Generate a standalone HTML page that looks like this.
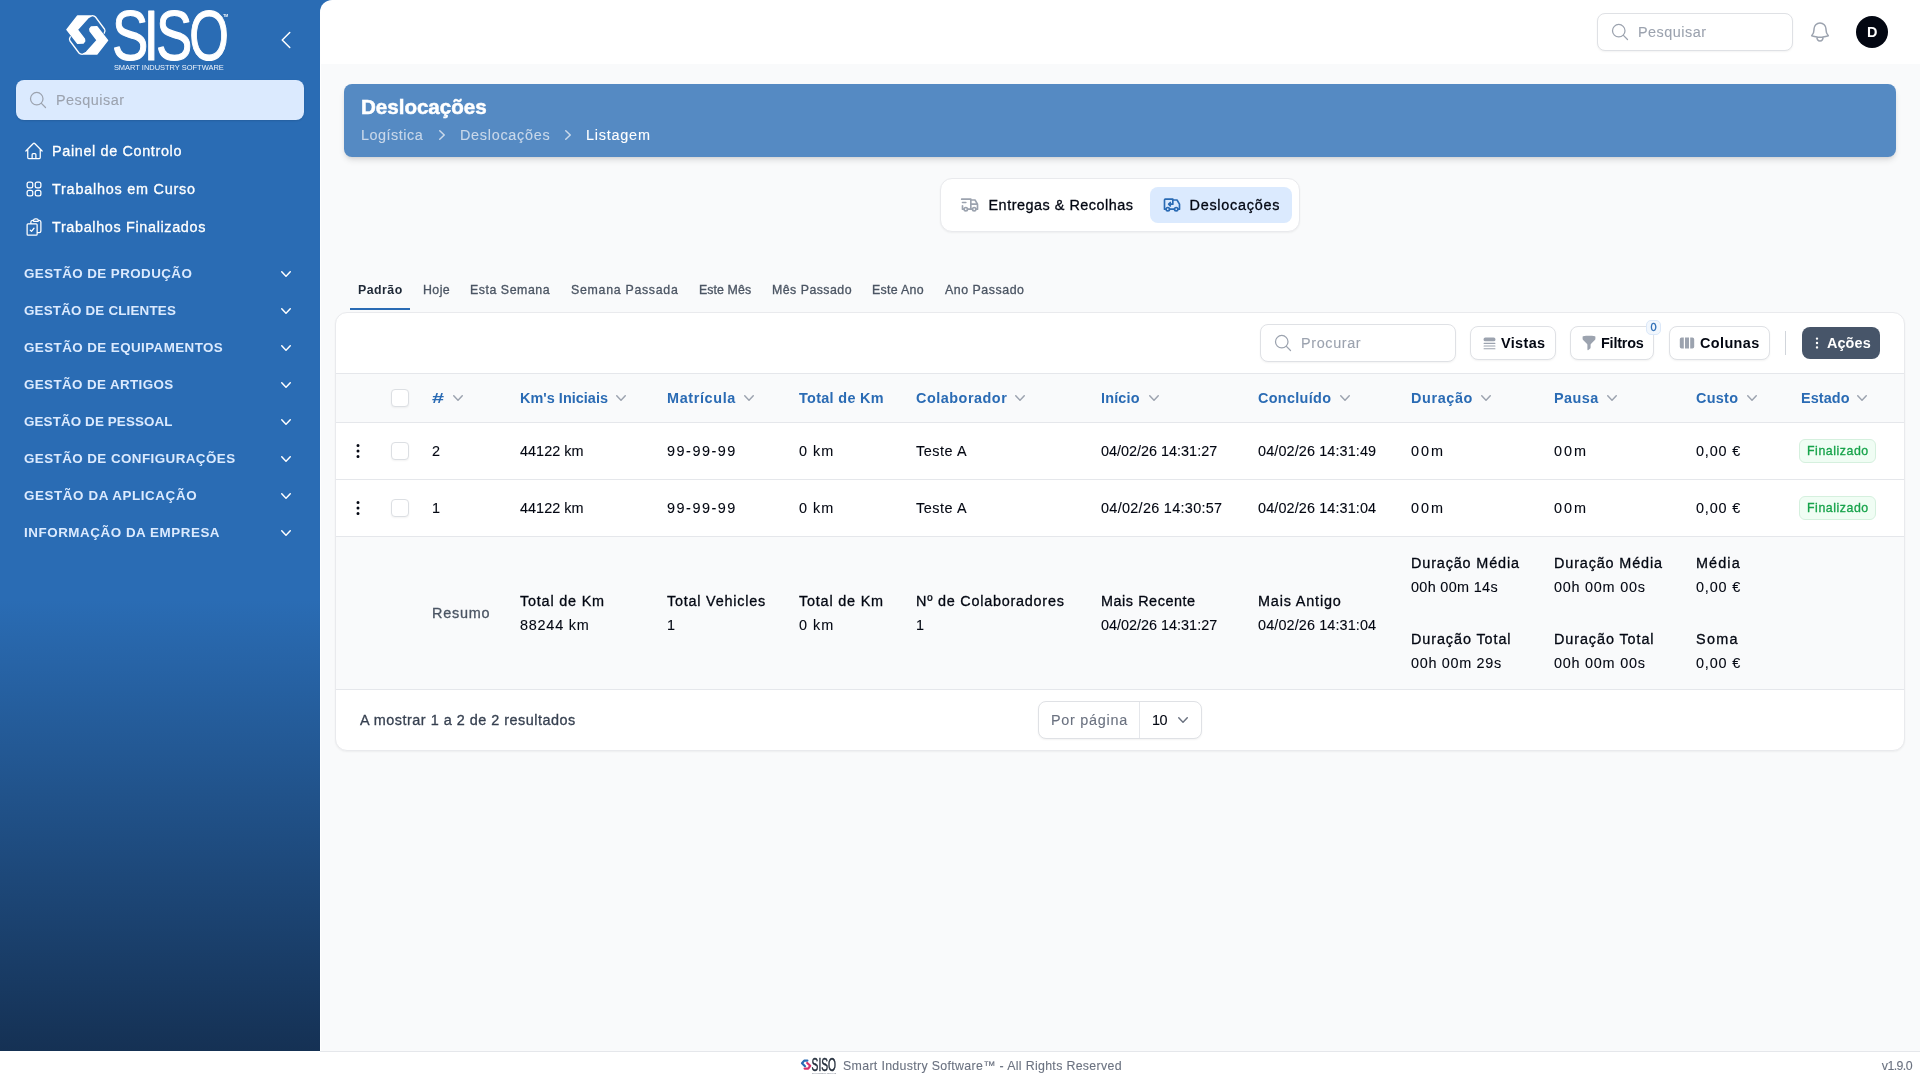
<!DOCTYPE html>
<html lang="pt">
<head>
<meta charset="utf-8">
<title>Deslocações - SISO</title>
<style>
:root{--k:1.03;--ms:0.3px;--rs:0.1px;--bs:0px;--ts:0.5px;--hx:1.5}
*{box-sizing:border-box;margin:0;padding:0}
html,body{width:1920px;height:1080px;overflow:hidden;background:#f9fafb}
body{font-family:'Liberation Sans', sans-serif;font-size:calc(14px*var(--k));color:#030712;position:relative;-webkit-font-smoothing:antialiased;filter:brightness(1)}
.abs{position:absolute}
.t{-webkit-text-stroke-width:var(--rs);position:absolute;white-space:nowrap;line-height:20px;height:20px}
svg{display:block;position:absolute}
/* sidebar */
.sidebar{position:absolute;left:0;top:0;width:334px;height:1051px;background:linear-gradient(180deg,#2a6cb4 0,#2a6cb4 600px,#153154 1051px)}
.sb-search{position:absolute;left:16px;top:80px;width:288px;height:40px;border-radius:8px;background:#dbeafe;box-shadow:0 1px 2px rgba(0,0,0,.12)}
.nav .t{color:#fff;font-weight:500;-webkit-text-stroke-width:var(--ms);left:52px}
.grp .t{-webkit-text-stroke-width:var(--bs);color:#dbeafe;font-weight:600;font-size:calc(13px*var(--k));left:24px}
/* topbar */
.topbar{position:absolute;left:320px;top:0;width:1600px;height:64px;background:#fff;border-top-left-radius:12px}
.inp{position:absolute;background:#fff;border:1px solid #dfe1e5;border-radius:8px;box-shadow:0 1px 2px rgba(0,0,0,.05)}
.ph{color:#9ca3af}
.avatar{position:absolute;left:1536px;top:16px;width:32px;height:32px;border-radius:50%;background:#030712}
/* main */
.main{position:absolute;left:320px;top:64px;width:1600px;height:987px;background:#f9fafb;box-shadow:inset 1px 0 0 #fff}
.banner{position:absolute;left:24px;top:20px;width:1552px;height:73px;border-radius:8px;background:#558ac3;box-shadow:0 4px 6px -1px rgba(0,0,0,.12),0 2px 4px -2px rgba(0,0,0,.1)}
.tabs{position:absolute;left:620px;top:114px;width:360px;height:54px;border-radius:12px;background:#fff;border:1px solid #e9eaed;box-shadow:0 1px 2px rgba(0,0,0,.05)}
.tab-on{position:absolute;left:209px;top:8px;width:142px;height:36px;border-radius:8px;background:#dbeafe}
.card{position:absolute;left:15px;top:248px;width:1570px;height:439px;border-radius:12px;background:#fff;border:1px solid #e9eaed;box-shadow:0 1px 2px rgba(0,0,0,.05);overflow:hidden}
.ci{position:absolute;left:1px;top:0;width:1566px;height:437px}
.btn{position:absolute;height:34px;top:13px;border-radius:8px;background:#fff;border:1px solid #dfe1e5;box-shadow:0 1px 2px rgba(0,0,0,.05)}
.btn .t{-webkit-text-stroke-width:var(--bs);font-weight:600;top:6px}
.hr{position:absolute;left:-1px;width:1568px;height:1px;background:#e5e7eb}
.thead{position:absolute;left:0;top:61px;width:1566px;box-shadow:-1px 0 0 #f9fafb,1px 0 0 #f9fafb;height:48px;background:#f9fafb}
.thead .t{-webkit-text-stroke-width:var(--bs);color:#2a6bb4;font-weight:600;top:14px}
.row{position:absolute;left:0;width:1566px;height:56px}
.row .t{top:18px}
.cb{position:absolute;left:54px;width:18px;height:18px;border-radius:4px;background:#fff;border:1px solid #dcdfe3;box-shadow:0 1px 2px rgba(0,0,0,.05)}
.badge{position:absolute;left:1462px;top:16px;width:77px;height:24px;border-radius:6px;background:#f0fdf4;border:1px solid #d5f0de}
.st{-webkit-text-stroke-width:var(--ms);top:216px;font-size:calc(12px*var(--k));font-weight:500;color:#4b5563}
.badge .t{-webkit-text-stroke-width:var(--ms);color:#16a34a;font-size:calc(12px*var(--k));font-weight:500;left:7px;top:1px}
.sum{position:absolute;left:0;top:224px;width:1566px;box-shadow:-1px 0 0 #f9fafb,1px 0 0 #f9fafb;height:152px;background:#f9fafb}
.sum .l{font-weight:500;-webkit-text-stroke-width:var(--ms)}
.pp{position:absolute;left:701px;top:388px;width:164px;height:38px;border-radius:8px;background:#fff;border:1px solid #dfe1e5;box-shadow:0 1px 2px rgba(0,0,0,.05)}
.footer{position:absolute;left:0;top:1051px;width:1920px;height:29px;background:#fff}
.footer:before{content:"";position:absolute;left:320px;top:0;width:1600px;height:1px;background:#e5e7eb}
.footer .t{font-size:calc(12px*var(--k));color:#6b7280;top:5px}
</style>
</head>
<body>
<aside class="sidebar">
  <div class="logo">
    <svg viewBox="0 0 170 64" width="170" height="64" style="left:60px;top:8px" aria-label="SISO Smart Industry Software">
      <g fill="#fff" stroke="#fff" stroke-width="1.4" stroke-linejoin="round" stroke-linecap="round">
        <path d="M17.60 7.90 L31.60 7.90 L28.10 9.70 L17.30 21.75 L24.40 30.90 L24.70 33.00 L23.20 35.00 L17.60 35.20 L6.90 21.60Z"/>
        <path d="M36.90 46.10 L22.90 46.10 L26.40 44.30 L37.20 32.25 L30.10 23.10 L29.80 21.00 L31.30 19.00 L36.90 18.80 L47.60 32.40Z"/>
        <path d="M32.25 7.60 Q34.50 7.80 35.50 9.00 L44.60 21.25 Q45.70 23.00 44.20 25.20" fill="none" stroke-width="1.3"/>
        <path d="M22.25 46.40 Q20.00 46.20 19.00 45.00 L9.90 32.75 Q8.80 31.00 10.30 28.80" fill="none" stroke-width="1.3"/>
      </g>
      <text y="51.6" fill="#fff" stroke="#fff" stroke-width="1.1" stroke-linejoin="round" font-family="'Liberation Sans', sans-serif" font-weight="400" font-size="70"><tspan x="52" textLength="36.3" lengthAdjust="spacingAndGlyphs">S</tspan><tspan x="83.6" textLength="15.6" lengthAdjust="spacingAndGlyphs">I</tspan><tspan x="95.9" textLength="36.3" lengthAdjust="spacingAndGlyphs">S</tspan><tspan x="129.2" textLength="39.6" lengthAdjust="spacingAndGlyphs">O</tspan></text>
      <text x="163.2" y="9.4" fill="#fff" font-family="'Liberation Sans', sans-serif" font-size="3.4" font-weight="700">TM</text>
      <text x="53.9" y="61.7" fill="#f0f5fc" font-family="'Liberation Sans', sans-serif" font-weight="400" font-size="7.9" textLength="109.9" lengthAdjust="spacingAndGlyphs">SMART INDUSTRY SOFTWARE</text>
    </svg>
  </div>
  <svg class="ic-chev-left" viewBox="0 0 24 24" width="24" height="24" style="left:274px;top:28px;color:#fff" fill="none" stroke="currentColor" stroke-width="1.5" stroke-linecap="round" stroke-linejoin="round"><path d="M15.75 19.5L8.25 12l7.5-7.5"/></svg>
  <div class="sb-search"><svg class="ic-search" viewBox="0 0 24 24" width="20" height="20" style="left:12px;top:10px;color:#9ca3af" fill="none" stroke="currentColor" stroke-width="1.5" stroke-linecap="round" stroke-linejoin="round"><path d="M21 21l-5.197-5.197m0 0A7.5 7.5 0 105.196 5.196a7.5 7.5 0 0010.607 10.607z"/></svg><span class="t ph" style="letter-spacing:0.49px;left:40px;top:10px">Pesquisar</span></div>
  <nav class="nav">
    <svg class="ic-home" viewBox="0 0 24 24" width="20" height="20" style="left:24px;top:141px;color:#fff" fill="none" stroke="currentColor" stroke-width="1.5" stroke-linecap="round" stroke-linejoin="round"><path d="M2.25 12l8.954-8.955c.44-.439 1.152-.439 1.591 0L21.75 12M4.5 9.75v10.125c0 .621.504 1.125 1.125 1.125H9.75v-4.875c0-.621.504-1.125 1.125-1.125h2.25c.621 0 1.125.504 1.125 1.125V21h4.125c.621 0 1.125-.504 1.125-1.125V9.75M8.25 21h8.25"/></svg><svg class="ic-grid" viewBox="0 0 24 24" width="20" height="20" style="left:24px;top:179px;color:#fff" fill="none" stroke="currentColor" stroke-width="1.5" stroke-linecap="round" stroke-linejoin="round"><path d="M3.75 6A2.25 2.25 0 016 3.75h2.25A2.25 2.25 0 0110.5 6v2.25a2.25 2.25 0 01-2.25 2.25H6a2.25 2.25 0 01-2.25-2.25V6zM3.75 15.75A2.25 2.25 0 016 13.5h2.25a2.25 2.25 0 012.25 2.25V18a2.25 2.25 0 01-2.25 2.25H6A2.25 2.25 0 013.75 18v-2.25zM13.5 6a2.25 2.25 0 012.25-2.25H18A2.25 2.25 0 0120.25 6v2.25A2.25 2.25 0 0118 10.5h-2.25a2.25 2.25 0 01-2.25-2.25V6zM13.5 15.75a2.25 2.25 0 012.25-2.25H18a2.25 2.25 0 012.25 2.25V18A2.25 2.25 0 0118 20.25h-2.25A2.25 2.25 0 0113.5 18v-2.25z"/></svg><svg class="ic-clip" viewBox="0 0 24 24" width="20" height="20" style="left:24px;top:217px;color:#fff" fill="none" stroke="currentColor" stroke-width="1.5" stroke-linecap="round" stroke-linejoin="round"><path d="M11.35 3.836c-.065.21-.1.433-.1.664 0 .414.336.75.75.75h4.5a.75.75 0 00.75-.75 2.25 2.25 0 00-.1-.664m-5.8 0A2.251 2.251 0 0113.5 2.25H15c1.012 0 1.867.668 2.15 1.586m-5.8 0c-.376.023-.75.05-1.124.08C9.095 4.01 8.25 4.973 8.25 6.108V8.25m8.9-4.414c.376.023.75.05 1.124.08 1.131.094 1.976 1.057 1.976 2.192V16.5A2.25 2.25 0 0118 18.75h-2.25m-7.5-10.5H4.875c-.621 0-1.125.504-1.125 1.125v11.25c0 .621.504 1.125 1.125 1.125h9.75c.621 0 1.125-.504 1.125-1.125V18.75m-7.5-10.5h6.375c.621 0 1.125.504 1.125 1.125v9.375m-8.25-3l1.5 1.5 3-3.75"/></svg>
    <span class="t" style="letter-spacing:0.64px;top:141px">Painel de Controlo</span>
    <span class="t" style="letter-spacing:0.77px;top:179px">Trabalhos em Curso</span>
    <span class="t" style="letter-spacing:0.65px;top:217px">Trabalhos Finalizados</span>
  </nav>
  <div class="grp">
    <svg class="ic-chev-down" viewBox="0 0 20 20" width="20" height="20" style="left:276px;top:264px;color:#fff" fill="currentColor"><path fill-rule="evenodd" d="M5.23 7.21a.75.75 0 011.06.02L10 11.168l3.71-3.938a.75.75 0 111.08 1.04l-4.25 4.5a.75.75 0 01-1.08 0l-4.25-4.5a.75.75 0 01.02-1.06z" clip-rule="evenodd"/></svg><svg class="ic-chev-down" viewBox="0 0 20 20" width="20" height="20" style="left:276px;top:301px;color:#fff" fill="currentColor"><path fill-rule="evenodd" d="M5.23 7.21a.75.75 0 011.06.02L10 11.168l3.71-3.938a.75.75 0 111.08 1.04l-4.25 4.5a.75.75 0 01-1.08 0l-4.25-4.5a.75.75 0 01.02-1.06z" clip-rule="evenodd"/></svg><svg class="ic-chev-down" viewBox="0 0 20 20" width="20" height="20" style="left:276px;top:338px;color:#fff" fill="currentColor"><path fill-rule="evenodd" d="M5.23 7.21a.75.75 0 011.06.02L10 11.168l3.71-3.938a.75.75 0 111.08 1.04l-4.25 4.5a.75.75 0 01-1.08 0l-4.25-4.5a.75.75 0 01.02-1.06z" clip-rule="evenodd"/></svg><svg class="ic-chev-down" viewBox="0 0 20 20" width="20" height="20" style="left:276px;top:375px;color:#fff" fill="currentColor"><path fill-rule="evenodd" d="M5.23 7.21a.75.75 0 011.06.02L10 11.168l3.71-3.938a.75.75 0 111.08 1.04l-4.25 4.5a.75.75 0 01-1.08 0l-4.25-4.5a.75.75 0 01.02-1.06z" clip-rule="evenodd"/></svg><svg class="ic-chev-down" viewBox="0 0 20 20" width="20" height="20" style="left:276px;top:412px;color:#fff" fill="currentColor"><path fill-rule="evenodd" d="M5.23 7.21a.75.75 0 011.06.02L10 11.168l3.71-3.938a.75.75 0 111.08 1.04l-4.25 4.5a.75.75 0 01-1.08 0l-4.25-4.5a.75.75 0 01.02-1.06z" clip-rule="evenodd"/></svg><svg class="ic-chev-down" viewBox="0 0 20 20" width="20" height="20" style="left:276px;top:449px;color:#fff" fill="currentColor"><path fill-rule="evenodd" d="M5.23 7.21a.75.75 0 011.06.02L10 11.168l3.71-3.938a.75.75 0 111.08 1.04l-4.25 4.5a.75.75 0 01-1.08 0l-4.25-4.5a.75.75 0 01.02-1.06z" clip-rule="evenodd"/></svg><svg class="ic-chev-down" viewBox="0 0 20 20" width="20" height="20" style="left:276px;top:486px;color:#fff" fill="currentColor"><path fill-rule="evenodd" d="M5.23 7.21a.75.75 0 011.06.02L10 11.168l3.71-3.938a.75.75 0 111.08 1.04l-4.25 4.5a.75.75 0 01-1.08 0l-4.25-4.5a.75.75 0 01.02-1.06z" clip-rule="evenodd"/></svg><svg class="ic-chev-down" viewBox="0 0 20 20" width="20" height="20" style="left:276px;top:523px;color:#fff" fill="currentColor"><path fill-rule="evenodd" d="M5.23 7.21a.75.75 0 011.06.02L10 11.168l3.71-3.938a.75.75 0 111.08 1.04l-4.25 4.5a.75.75 0 01-1.08 0l-4.25-4.5a.75.75 0 01.02-1.06z" clip-rule="evenodd"/></svg>
    <span class="t" style="letter-spacing:0.43px;top:264px">GESTÃO DE PRODUÇÃO</span>
    <span class="t" style="letter-spacing:0.19px;top:301px">GESTÃO DE CLIENTES</span>
    <span class="t" style="letter-spacing:0.43px;top:338px">GESTÃO DE EQUIPAMENTOS</span>
    <span class="t" style="letter-spacing:0.39px;top:375px">GESTÃO DE ARTIGOS</span>
    <span class="t" style="letter-spacing:0.13px;top:412px">GESTÃO DE PESSOAL</span>
    <span class="t" style="letter-spacing:0.44px;top:449px">GESTÃO DE CONFIGURAÇÕES</span>
    <span class="t" style="letter-spacing:0.6px;top:486px">GESTÃO DA APLICAÇÃO</span>
    <span class="t" style="letter-spacing:0.55px;top:523px">INFORMAÇÃO DA EMPRESA</span>
  </div>
</aside>
<header class="topbar">
  <div class="inp" style="left:1277px;top:13px;width:196px;height:38px"><svg class="ic-search" viewBox="0 0 24 24" width="20" height="20" style="left:12px;top:8px;color:#9ca3af" fill="none" stroke="currentColor" stroke-width="1.5" stroke-linecap="round" stroke-linejoin="round"><path d="M21 21l-5.197-5.197m0 0A7.5 7.5 0 105.196 5.196a7.5 7.5 0 0010.607 10.607z"/></svg><span class="t ph" style="letter-spacing:0.49px;left:40px;top:8px">Pesquisar</span></div>
  <svg class="ic-bell" viewBox="0 0 24 24" width="24" height="24" style="left:1488px;top:20px;color:#9ca3af" fill="none" stroke="currentColor" stroke-width="1.5" stroke-linecap="round" stroke-linejoin="round"><path d="M14.857 17.082a23.848 23.848 0 005.454-1.31A8.967 8.967 0 0118 9.75v-.7V9A6 6 0 006 9v.75a8.967 8.967 0 01-2.312 6.022c1.733.64 3.56 1.085 5.455 1.31m5.714 0a24.255 24.255 0 01-5.714 0m5.714 0a3 3 0 11-5.714 0"/></svg>
  <div class="avatar"><span class="t" style="left:11px;top:6px;color:#fff;font-weight:600;-webkit-text-stroke-width:var(--bs)">D</span></div>
</header>
<main class="main">
  <section class="banner">
    <h1 class="t" style="letter-spacing:-0.03px;left:17px;top:9px;font-size:calc(20px*var(--k));line-height:28px;height:28px;font-weight:700;-webkit-text-stroke-width:var(--ts);color:#fff">Deslocações</h1>
    <span class="t" style="letter-spacing:0.51px;left:17px;top:41px;color:#c9d8ea">Logística</span>
    <svg class="ic-chev-right" viewBox="0 0 20 20" width="20" height="20" style="left:88px;top:41px;color:#c9d8ea" fill="currentColor"><path fill-rule="evenodd" d="M7.21 14.77a.75.75 0 01.02-1.06L11.168 10 7.23 6.29a.75.75 0 111.04-1.08l4.5 4.25a.75.75 0 010 1.08l-4.5 4.25a.75.75 0 01-1.06-.02z" clip-rule="evenodd"/></svg><span class="t" style="letter-spacing:0.72px;left:116px;top:41px;color:#c9d8ea">Deslocações</span><svg class="ic-chev-right" viewBox="0 0 20 20" width="20" height="20" style="left:214px;top:41px;color:#c9d8ea" fill="currentColor"><path fill-rule="evenodd" d="M7.21 14.77a.75.75 0 01.02-1.06L11.168 10 7.23 6.29a.75.75 0 111.04-1.08l4.5 4.25a.75.75 0 010 1.08l-4.5 4.25a.75.75 0 01-1.06-.02z" clip-rule="evenodd"/></svg>
    <span class="t" style="letter-spacing:0.78px;left:242px;top:41px;color:#fff">Listagem</span>
  </section>
  <div class="tabs" role="tablist">
    <div class="tab-on"></div><svg class="ic-truck-delivery" viewBox="0 0 24 24" width="20" height="20" style="left:19px;top:16px;color:#9ca3af" fill="none" stroke="currentColor" stroke-width="2" stroke-linecap="round" stroke-linejoin="round"><path d="M7 17m-2 0a2 2 0 1 0 4 0a2 2 0 1 0 -4 0"/><path d="M17 17m-2 0a2 2 0 1 0 4 0a2 2 0 1 0 -4 0"/><path d="M5 17h-2v-4m-1 -8h11v12m-4 0h6m4 0h2v-6h-8m0 -5h5l3 5"/><path d="M3 9l4 0"/></svg><svg class="ic-truck-return" viewBox="0 0 24 24" width="20" height="20" style="left:221px;top:16px;color:#2a6bb4" fill="none" stroke="currentColor" stroke-width="2" stroke-linecap="round" stroke-linejoin="round"><path d="M7 17m-2 0a2 2 0 1 0 4 0a2 2 0 1 0 -4 0"/><path d="M17 17m-2 0a2 2 0 1 0 4 0a2 2 0 1 0 -4 0"/><path d="M5 17h-2v-11a1 1 0 0 1 1 -1h9v6h-5l2 2m0 -4l-2 2"/><path d="M9 17l6 0"/><path d="M13 6h5l3 5v6h-2"/></svg>
    <span class="t" style="letter-spacing:0.51px;left:47.5px;top:16px;font-weight:500;-webkit-text-stroke-width:var(--ms)">Entregas &amp; Recolhas</span>
    <span class="t" style="letter-spacing:0.75px;left:248.5px;top:16px;font-weight:500;-webkit-text-stroke-width:var(--ms)">Deslocações</span>
  </div>
  <div class="subtabs" role="tablist">
    <span class="t" style="letter-spacing:0.46px;left:38px;top:216px;font-size:calc(12px*var(--k));font-weight:600;-webkit-text-stroke-width:var(--bs);color:#1f2937">Padrão</span>
    <span class="t st" style="letter-spacing:0.43px;left:103px">Hoje</span>
    <span class="t st" style="letter-spacing:0.54px;left:150px">Esta Semana</span>
    <span class="t st" style="letter-spacing:0.71px;left:251px">Semana Passada</span>
    <span class="t st" style="letter-spacing:0.08px;left:379px">Este Mês</span>
    <span class="t st" style="letter-spacing:0.47px;left:452px">Mês Passado</span>
    <span class="t st" style="letter-spacing:0.29px;left:552px">Este Ano</span>
    <span class="t st" style="letter-spacing:0.54px;left:625px">Ano Passado</span>
    <div class="abs" style="left:30px;top:244px;width:60px;height:2px;background:#2a6bb4"></div>
  </div>
  <section class="card">
   <div class="ci" role="table" aria-label="Deslocações">
    <div class="inp" style="left:923px;top:11px;width:196px;height:38px"><svg class="ic-search" viewBox="0 0 24 24" width="20" height="20" style="left:12px;top:8px;color:#9ca3af" fill="none" stroke="currentColor" stroke-width="1.5" stroke-linecap="round" stroke-linejoin="round"><path d="M21 21l-5.197-5.197m0 0A7.5 7.5 0 105.196 5.196a7.5 7.5 0 0010.607 10.607z"/></svg><span class="t ph" style="letter-spacing:0.63px;left:40px;top:8px">Procurar</span></div>
    <div class="btn" style="left:1133px;width:86px"><svg class="ic-queue" viewBox="0 0 20 20" width="15" height="15" style="left:10.9px;top:9.2px;color:#9ca3af" fill="currentColor"><path d="M2 4.5A2.5 2.5 0 014.5 2h11a2.5 2.5 0 010 5h-11A2.5 2.5 0 012 4.5zM2.75 9.083a.75.75 0 000 1.5h14.5a.75.75 0 000-1.5H2.75zM2.75 12.663a.75.75 0 000 1.5h14.5a.75.75 0 000-1.5H2.75zM2.75 16.25a.75.75 0 000 1.5h14.5a.75.75 0 100-1.5H2.75z"/></svg><span class="t" style="letter-spacing:0.37px;left:30px">Vistas</span></div>
    <div class="btn" style="left:1233px;width:84px"><svg class="ic-funnel" viewBox="0 0 20 20" width="16" height="16" style="left:10px;top:8px;color:#9ca3af" fill="currentColor"><path fill-rule="evenodd" d="M2.628 1.601C5.028 1.206 7.49 1 10 1s4.973.206 7.372.601a.75.75 0 01.628.74v2.288a2.25 2.25 0 01-.659 1.59l-4.682 4.683a2.25 2.25 0 00-.659 1.59v3.037c0 .684-.31 1.33-.844 1.757l-1.937 1.55A.75.75 0 018 18.25v-5.757a2.25 2.25 0 00-.659-1.591L2.659 6.22A2.25 2.25 0 012 4.629V2.34a.75.75 0 01.628-.74z" clip-rule="evenodd"/></svg><span class="t" style="letter-spacing:-0.2px;left:30px">Filtros</span></div>
    <div class="btn" style="left:1332px;width:101px"><svg class="ic-columns" viewBox="0 0 20 20" width="16" height="16" style="left:9px;top:8px;color:#9ca3af" fill="currentColor"><path d="M14 17h2.75A2.25 2.25 0 0019 14.75v-9.5A2.25 2.25 0 0016.75 3H14v14zM12.5 3h-5v14h5V3zM3.25 3H6v14H3.25A2.25 2.25 0 011 14.75v-9.5A2.25 2.25 0 013.25 3z"/></svg><span class="t" style="letter-spacing:0.4px;left:30px">Colunas</span></div>
    <div class="abs fbadge" style="left:1308.5px;top:6.5px;width:15.5px;height:15px;border-radius:5px;background:#f2f7fd;border:1px solid #dbe8f9"><span class="t" style="left:4px;top:-3.5px;font-size:11px;font-weight:500;-webkit-text-stroke-width:var(--ms);color:#2a6bb4">0</span></div>
    <div class="abs" style="left:1448px;top:18px;width:1px;height:24px;background:#d1d5db"></div>
    <div class="abs" style="left:1465px;top:14px;width:78px;height:32px;border-radius:8px;background:#475569"><svg class="ic-dots-v" viewBox="0 0 20 20" width="16" height="16" style="left:7px;top:8px;color:#fff" fill="currentColor"><path d="M10 3a1.5 1.5 0 110 3 1.5 1.5 0 010-3zM10 8.5a1.5 1.5 0 110 3 1.5 1.5 0 010-3zM11.5 15.5a1.5 1.5 0 10-3 0 1.5 1.5 0 003 0z"/></svg><span class="t" style="letter-spacing:0.1px;left:25px;top:6px;color:#fff;font-weight:600;-webkit-text-stroke-width:var(--bs)">Ações</span></div>
    <div class="hr" style="top:60px"></div>
    <div class="thead" role="row">
      <div class="cb" style="top:15px"></div><svg class="ic-chev-down" viewBox="0 0 20 20" width="20" height="20" style="left:110.9px;top:14px;color:#9ca3af" fill="currentColor"><path fill-rule="evenodd" d="M5.23 7.21a.75.75 0 011.06.02L10 11.168l3.71-3.938a.75.75 0 111.08 1.04l-4.25 4.5a.75.75 0 01-1.08 0l-4.25-4.5a.75.75 0 01.02-1.06z" clip-rule="evenodd"/></svg><svg class="ic-chev-down" viewBox="0 0 20 20" width="20" height="20" style="left:274.4px;top:14px;color:#9ca3af" fill="currentColor"><path fill-rule="evenodd" d="M5.23 7.21a.75.75 0 011.06.02L10 11.168l3.71-3.938a.75.75 0 111.08 1.04l-4.25 4.5a.75.75 0 01-1.08 0l-4.25-4.5a.75.75 0 01.02-1.06z" clip-rule="evenodd"/></svg><svg class="ic-chev-down" viewBox="0 0 20 20" width="20" height="20" style="left:401.7px;top:14px;color:#9ca3af" fill="currentColor"><path fill-rule="evenodd" d="M5.23 7.21a.75.75 0 011.06.02L10 11.168l3.71-3.938a.75.75 0 111.08 1.04l-4.25 4.5a.75.75 0 01-1.08 0l-4.25-4.5a.75.75 0 01.02-1.06z" clip-rule="evenodd"/></svg><svg class="ic-chev-down" viewBox="0 0 20 20" width="20" height="20" style="left:673.2px;top:14px;color:#9ca3af" fill="currentColor"><path fill-rule="evenodd" d="M5.23 7.21a.75.75 0 011.06.02L10 11.168l3.71-3.938a.75.75 0 111.08 1.04l-4.25 4.5a.75.75 0 01-1.08 0l-4.25-4.5a.75.75 0 01.02-1.06z" clip-rule="evenodd"/></svg><svg class="ic-chev-down" viewBox="0 0 20 20" width="20" height="20" style="left:806.7px;top:14px;color:#9ca3af" fill="currentColor"><path fill-rule="evenodd" d="M5.23 7.21a.75.75 0 011.06.02L10 11.168l3.71-3.938a.75.75 0 111.08 1.04l-4.25 4.5a.75.75 0 01-1.08 0l-4.25-4.5a.75.75 0 01.02-1.06z" clip-rule="evenodd"/></svg><svg class="ic-chev-down" viewBox="0 0 20 20" width="20" height="20" style="left:998.2px;top:14px;color:#9ca3af" fill="currentColor"><path fill-rule="evenodd" d="M5.23 7.21a.75.75 0 011.06.02L10 11.168l3.71-3.938a.75.75 0 111.08 1.04l-4.25 4.5a.75.75 0 01-1.08 0l-4.25-4.5a.75.75 0 01.02-1.06z" clip-rule="evenodd"/></svg><svg class="ic-chev-down" viewBox="0 0 20 20" width="20" height="20" style="left:1139.4px;top:14px;color:#9ca3af" fill="currentColor"><path fill-rule="evenodd" d="M5.23 7.21a.75.75 0 011.06.02L10 11.168l3.71-3.938a.75.75 0 111.08 1.04l-4.25 4.5a.75.75 0 01-1.08 0l-4.25-4.5a.75.75 0 01.02-1.06z" clip-rule="evenodd"/></svg><svg class="ic-chev-down" viewBox="0 0 20 20" width="20" height="20" style="left:1265.0px;top:14px;color:#9ca3af" fill="currentColor"><path fill-rule="evenodd" d="M5.23 7.21a.75.75 0 011.06.02L10 11.168l3.71-3.938a.75.75 0 111.08 1.04l-4.25 4.5a.75.75 0 01-1.08 0l-4.25-4.5a.75.75 0 01.02-1.06z" clip-rule="evenodd"/></svg><svg class="ic-chev-down" viewBox="0 0 20 20" width="20" height="20" style="left:1405.2px;top:14px;color:#9ca3af" fill="currentColor"><path fill-rule="evenodd" d="M5.23 7.21a.75.75 0 011.06.02L10 11.168l3.71-3.938a.75.75 0 111.08 1.04l-4.25 4.5a.75.75 0 01-1.08 0l-4.25-4.5a.75.75 0 01.02-1.06z" clip-rule="evenodd"/></svg><svg class="ic-chev-down" viewBox="0 0 20 20" width="20" height="20" style="left:1515.4px;top:14px;color:#9ca3af" fill="currentColor"><path fill-rule="evenodd" d="M5.23 7.21a.75.75 0 011.06.02L10 11.168l3.71-3.938a.75.75 0 111.08 1.04l-4.25 4.5a.75.75 0 01-1.08 0l-4.25-4.5a.75.75 0 01.02-1.06z" clip-rule="evenodd"/></svg>
      <span class="t" style="left:95px;transform:scaleX(var(--hx));transform-origin:0 50%">#</span>
      <span class="t" style="letter-spacing:0.04px;left:183px">Km's Iniciais</span>
      <span class="t" style="letter-spacing:0.63px;left:330px">Matrícula</span>
      <span class="t" style="letter-spacing:0.32px;left:462px">Total de Km</span>
      <span class="t" style="letter-spacing:0.51px;left:579px">Colaborador</span>
      <span class="t" style="letter-spacing:0.17px;left:764px">Início</span>
      <span class="t" style="letter-spacing:0.32px;left:921px">Concluído</span>
      <span class="t" style="letter-spacing:0.61px;left:1074px">Duração</span>
      <span class="t" style="letter-spacing:0.48px;left:1217px">Pausa</span>
      <span class="t" style="letter-spacing:0.29px;left:1359px">Custo</span>
      <span class="t" style="letter-spacing:0.08px;left:1464px">Estado</span>
    </div>
    <div class="hr" style="top:109px"></div>
    <div class="row" role="row" style="top:110px">
      <svg class="ic-dots-v" viewBox="0 0 20 20" width="20" height="20" style="left:11px;top:18px;color:#030712" fill="currentColor"><path d="M10 3a1.5 1.5 0 110 3 1.5 1.5 0 010-3zM10 8.5a1.5 1.5 0 110 3 1.5 1.5 0 010-3zM11.5 15.5a1.5 1.5 0 10-3 0 1.5 1.5 0 003 0z"/></svg><div class="cb" style="top:19px"></div>
      <span class="t" style="left:95px">2</span>
      <span class="t" style="letter-spacing:0.04px;left:183px">44122 km</span>
      <span class="t" style="letter-spacing:1.53px;left:330px">99-99-99</span>
      <span class="t" style="letter-spacing:0.98px;left:462px">0 km</span>
      <span class="t" style="letter-spacing:0.54px;left:579px">Teste A</span>
      <span class="t" style="left:764px">04/02/26 14:31:27</span>
      <span class="t" style="letter-spacing:0.12px;left:921px">04/02/26 14:31:49</span>
      <span class="t" style="letter-spacing:1.99px;left:1074px">00m</span>
      <span class="t" style="letter-spacing:1.99px;left:1217px">00m</span>
      <span class="t" style="letter-spacing:0.84px;left:1359px">0,00 €</span>
      <div class="badge"><span class="t" style="letter-spacing:0.54px">Finalizado</span></div>
    </div>
    <div class="hr" style="top:166px"></div>
    <div class="row" role="row" style="top:167px">
      <svg class="ic-dots-v" viewBox="0 0 20 20" width="20" height="20" style="left:11px;top:18px;color:#030712" fill="currentColor"><path d="M10 3a1.5 1.5 0 110 3 1.5 1.5 0 010-3zM10 8.5a1.5 1.5 0 110 3 1.5 1.5 0 010-3zM11.5 15.5a1.5 1.5 0 10-3 0 1.5 1.5 0 003 0z"/></svg><div class="cb" style="top:19px"></div>
      <span class="t" style="left:95px">1</span>
      <span class="t" style="letter-spacing:0.04px;left:183px">44122 km</span>
      <span class="t" style="letter-spacing:1.53px;left:330px">99-99-99</span>
      <span class="t" style="letter-spacing:0.98px;left:462px">0 km</span>
      <span class="t" style="letter-spacing:0.54px;left:579px">Teste A</span>
      <span class="t" style="letter-spacing:0.31px;left:764px">04/02/26 14:30:57</span>
      <span class="t" style="letter-spacing:0.12px;left:921px">04/02/26 14:31:04</span>
      <span class="t" style="letter-spacing:1.99px;left:1074px">00m</span>
      <span class="t" style="letter-spacing:1.99px;left:1217px">00m</span>
      <span class="t" style="letter-spacing:0.84px;left:1359px">0,00 €</span>
      <div class="badge"><span class="t" style="letter-spacing:0.54px">Finalizado</span></div>
    </div>
    <div class="hr" style="top:223px"></div>
    <div class="sum" role="row">
      <span class="t" style="letter-spacing:0.78px;left:95px;top:66px;font-weight:500;-webkit-text-stroke-width:var(--ms);color:#4b5563">Resumo</span>
      <span class="t l" style="letter-spacing:0.8px;left:183px;top:54px">Total de Km</span><span class="t" style="letter-spacing:0.77px;left:183px;top:78px">88244 km</span>
      <span class="t l" style="letter-spacing:0.78px;left:330px;top:54px">Total Vehicles</span><span class="t" style="left:330px;top:78px">1</span>
      <span class="t l" style="letter-spacing:0.8px;left:462px;top:54px">Total de Km</span><span class="t" style="letter-spacing:0.98px;left:462px;top:78px">0 km</span>
      <span class="t l" style="letter-spacing:0.76px;left:579px;top:54px">Nº de Colaboradores</span><span class="t" style="left:579px;top:78px">1</span>
      <span class="t l" style="letter-spacing:0.55px;left:764px;top:54px">Mais Recente</span><span class="t" style="left:764px;top:78px">04/02/26 14:31:27</span>
      <span class="t l" style="letter-spacing:0.83px;left:921px;top:54px">Mais Antigo</span><span class="t" style="letter-spacing:0.12px;left:921px;top:78px">04/02/26 14:31:04</span>
      <span class="t l" style="letter-spacing:0.86px;left:1074px;top:16px">Duração Média</span><span class="t" style="letter-spacing:0.33px;left:1074px;top:40px">00h 00m 14s</span>
      <span class="t l" style="letter-spacing:0.91px;left:1074px;top:92px">Duração Total</span><span class="t" style="letter-spacing:0.69px;left:1074px;top:116px">00h 00m 29s</span>
      <span class="t l" style="letter-spacing:0.86px;left:1217px;top:16px">Duração Média</span><span class="t" style="letter-spacing:0.76px;left:1217px;top:40px">00h 00m 00s</span>
      <span class="t l" style="letter-spacing:0.91px;left:1217px;top:92px">Duração Total</span><span class="t" style="letter-spacing:0.76px;left:1217px;top:116px">00h 00m 00s</span>
      <span class="t l" style="letter-spacing:1.11px;left:1359px;top:16px">Média</span><span class="t" style="letter-spacing:0.84px;left:1359px;top:40px">0,00 €</span>
      <span class="t l" style="letter-spacing:1.27px;left:1359px;top:92px">Soma</span><span class="t" style="letter-spacing:0.84px;left:1359px;top:116px">0,00 €</span>
    </div>
    <div class="hr" style="top:376px"></div>
    <span class="t" style="letter-spacing:0.5px;left:23px;top:397px;font-weight:500;-webkit-text-stroke-width:var(--ms);color:#374151">A mostrar 1 a 2 de 2 resultados</span>
    <div class="pp">
      <span class="t" style="letter-spacing:0.73px;left:12px;top:8px;color:#6b7280">Por página</span>
      <div class="abs" style="left:100px;top:0;width:1px;height:36px;background:#e5e7eb"></div>
      <span class="t" style="letter-spacing:-0.6px;left:113px;top:8px">10</span><svg class="ic-chev-down" viewBox="0 0 20 20" width="20" height="20" style="left:134px;top:8px;color:#6b7280" fill="currentColor"><path fill-rule="evenodd" d="M5.23 7.21a.75.75 0 011.06.02L10 11.168l3.71-3.938a.75.75 0 111.08 1.04l-4.25 4.5a.75.75 0 01-1.08 0l-4.25-4.5a.75.75 0 01.02-1.06z" clip-rule="evenodd"/></svg>
    </div>
   </div>
  </section>
</main>
<footer class="footer">
  <svg viewBox="0 0 38 18" width="38" height="18" style="left:799px;top:6px" aria-label="SISO">
    <g fill="none" stroke-linecap="round" stroke-linejoin="round" stroke-width="2.2"><path d="M8.4 3.6H5.2L3 6.2 6 9.2" stroke="#2a6bb4"/><path d="M5.6 11.6h3.6l2-2.8L8.2 6" stroke="#d6336c"/></g>
    <text x="12.6" y="14.2" fill="#1f2937" stroke="#1f2937" stroke-width=".5" font-family="'Liberation Sans', sans-serif" font-size="17.5" textLength="24.5" lengthAdjust="spacingAndGlyphs">SISO</text>
    <text x="13" y="16.9" fill="#6b7280" font-family="'Liberation Sans', sans-serif" font-size="2" textLength="24" lengthAdjust="spacingAndGlyphs">SMART INDUSTRY SOFTWARE</text>
  </svg>
    <span class="t" style="letter-spacing:0.33px;left:843px">Smart Industry Software™ - All Rights Reserved</span>
  <span class="t" style="letter-spacing:-0.59px;right:8px">v1.9.0</span>
</footer>
</body>
</html>
